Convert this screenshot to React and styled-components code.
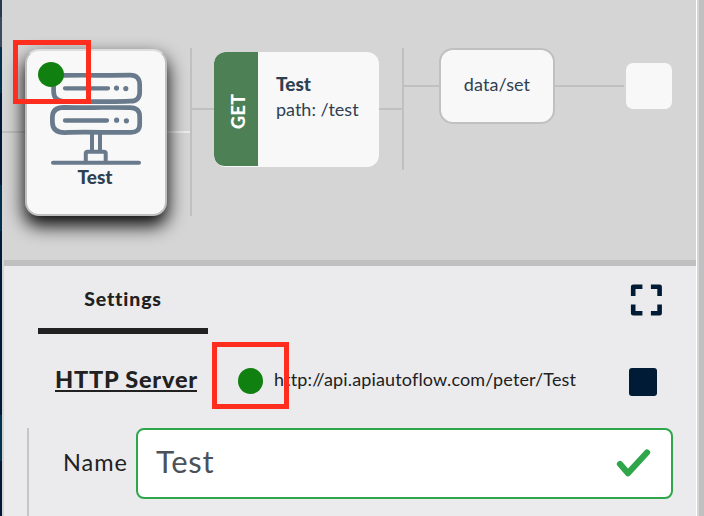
import React from "react";
import styled, { createGlobalStyle } from "styled-components";

const GlobalStyle = createGlobalStyle`
  * { box-sizing: border-box; }
  body { margin: 0; overflow: hidden; font-family: Lato, "Liberation Sans", sans-serif; }
`;

const Screen = styled.div`
  display: flex;
  width: 704px;
  height: 516px;
  background: #d5d5d5;
  overflow: hidden;
`;

const Backdrop = styled.div`
  width: 2px;
  background: linear-gradient(#2b3a50 0 17px, #3a4a60 17px 47px, #00304e 47px 93px, #001738 93px 185px, #00304e 185px 231px, #001b3a 231px 415px, #003450 415px 461px, #001738 461px);
`;

const Workspace = styled.main`
  width: 694px;
`;

const ScrollTrack = styled.div`
  width: 8px;
  border-left: 1px solid #fff;
  background: linear-gradient(to right, #d5d5d5 2px, #c0c0c0 2px);
`;

const Flow = styled.section`
  display: flex;
  align-items: flex-start;
  height: 260px;
  padding-top: 48px;
  background: #d5d5d5;
`;

const Wire = styled.div`
  flex: none;
  width: ${(p) => p.$length}px;
  height: 2px;
  margin-top: ${(p) => p.$drop}px;
  background: ${(p) => (p.$light ? "#ececec" : "#c0c0c0")};
`;

const Branch = styled.div`
  flex: none;
  width: 2px;
  height: ${(p) => p.$height}px;
  background: #c0c0c0;
`;

const NodeCard = styled.article`
  flex: none;
  color: #2f4052;
  background: #f8f8f8;
`;

const ServerCard = styled(NodeCard)`
  position: relative;
  width: 142px;
  height: 167px;
  margin-top: 1px;
  padding-top: 21px;
  border: 2px solid #c0c0c0;
  border-top-color: #dedede;
  border-radius: 14px;
  text-align: center;
  box-shadow: 0 9px 18px 1px rgba(0, 0, 0, 0.95);
`;

const ServerDrawing = styled.svg`
  display: block;
  width: 94px;
  height: 94px;
  margin: 0 0 -1px 22px;
`;

const NodeTitle = styled.div`
  padding-right: ${(p) => p.$inset || 0}px;
  font-size: 19px;
  font-weight: 900;
  line-height: 24px;
`;

const StatusDot = styled.span`
  flex: none;
  width: ${(p) => p.$w}px;
  height: ${(p) => p.$h}px;
  border-radius: 50%;
  background: #108010;
`;

const Highlight = styled.div`
  position: absolute;
  z-index: 2;
  display: flex;
  left: ${(p) => p.$x}px;
  top: ${(p) => p.$y}px;
  width: ${(p) => p.$w}px;
  height: ${(p) => p.$h}px;
  padding: ${(p) => p.$pad};
  border: 5px solid #ff2d1e;
`;

const RouteCard = styled(NodeCard)`
  display: flex;
  width: 165px;
  height: 115px;
  margin-top: 4px;
  border-radius: 12px;
  overflow: hidden;
`;

const Method = styled.div`
  display: flex;
  align-items: center;
  justify-content: center;
  width: 44px;
  height: 114px;
  padding: 0 4px 4px 0;
  border-radius: 0 10px 10px 0;
  writing-mode: vertical-rl;
  transform: rotate(180deg);
  background: #4d8054;
  color: #fff;
  font-size: 18px;
  font-weight: 900;
  letter-spacing: 0.5px;
`;

const RouteText = styled.div`
  padding: 20px 0 0 18px;
`;

const RoutePath = styled.div`
  font-size: 18px;
  line-height: 26px;
`;

const ActionCard = styled(NodeCard)`
  width: 116px;
  height: 76px;
  padding-top: 21px;
  border: 2px solid #c0c0c0;
  border-radius: 14px;
  text-align: center;
  font-size: 18px;
  line-height: 26px;
  letter-spacing: 0.1px;
`;

const EmptyCard = styled(NodeCard)`
  width: 46px;
  height: 46px;
  margin: 15px 0 0 2px;
  border-radius: 7px;
`;

const Panel = styled.section`
  height: 256px;
  margin-left: 2px;
  border-top: 6px solid #c0c0c0;
  background: #ebebed;
  color: #212121;
`;

const TabBar = styled.div`
  display: flex;
  justify-content: space-between;
  height: 68px;
  padding: 0 34px;
`;

const Tab = styled.div`
  width: 170px;
  border-bottom: 6px solid #212121;
  padding-top: 20px;
  text-align: center;
  font-size: 19.5px;
  font-weight: 900;
  line-height: 26px;
  letter-spacing: 0.85px;
`;

const ExpandIcon = styled.svg`
  width: 32px;
  height: 32px;
  margin-top: 18px;
`;

const ServerRow = styled.div`
  position: relative;
  display: flex;
  height: 94px;
  padding-left: 51px;
`;

const Heading = styled.h2`
  width: 142px;
  height: 26px;
  margin: 32px 0 0;
  border-bottom: 2px solid #212121;
  font-size: 23.5px;
  font-weight: 900;
  line-height: 26px;
  letter-spacing: 0.8px;
  white-space: nowrap;
`;

const Address = styled.div`
  width: 354px;
  padding: 32px 0 0 77px;
  font-size: 18px;
  line-height: 26px;
  letter-spacing: 0.15px;
  white-space: nowrap;
`;

const StopButton = styled.button`
  width: 28px;
  height: 28px;
  margin-top: 34px;
  margin-left: 78px;
  border: 0;
  border-radius: 3px;
  background: #001b36;
`;

const Fields = styled.div`
  display: flex;
  height: 88px;
  margin-left: 23px;
  border-left: 2px solid #c6c6c8;
`;

const Label = styled.label`
  width: 107px;
  padding: 18px 0 0 34px;
  font-size: 23.5px;
  line-height: 32px;
  letter-spacing: 1px;
  white-space: nowrap;
`;

const Input = styled.div`
  display: flex;
  justify-content: space-between;
  width: 537px;
  height: 71px;
  padding: 11px 20px 0 18px;
  border: 2px solid #30a64b;
  border-radius: 8px;
  background: #fff;
  color: #4b525a;
  font-size: 31px;
  line-height: 40px;
  letter-spacing: 0.7px;
`;

const CheckIcon = styled.svg`
  width: 36px;
  height: 32px;
  margin-top: 6px;
`;

export default function App() {
  return (
    <Screen>
      <GlobalStyle />
      <Backdrop />
      <Workspace>
        <Flow>
          <Wire $length={23} $drop={83} />
          <ServerCard>
            <Highlight $x={-14} $y={-11} $w={78} $h={64} $pad="17px 0 0 20px">
              <StatusDot $w={26} $h={25} />
            </Highlight>
            <ServerDrawing viewBox="49 72 94 94" fill="none" stroke="#687a8b" strokeWidth="4.7" strokeLinecap="round" strokeLinejoin="round">
              <path d="M63 75.4C81 75 112 75.6 130 75.2Q139.8 75 139.7 85V92Q139.8 101.4 130 101.2C112 102.3 85 101.2 65 101.5Q53.5 101.4 53.6 91V84Q53.5 75.5 63 75.4Z" />
              <path d="M64 107.3C86 107.8 111 107.3 130 107.6Q140 107.8 139.7 117V124Q139.8 132.8 130 132.4C110 132.8 82 131.5 65 132.6Q52.4 132.6 52.4 122V117Q52.5 107.4 64 107.3Z" />
              <path strokeWidth="4.3" d="M65 88.3H108M65 120.5H107" />
              <path strokeWidth="5.2" d="M116.5 88.1h.01M125.8 88.6h.01M116.6 120.2h.01M126.4 120.8h.01" />
              <path strokeWidth="4" d="M92 134V151M100 134V151M85.8 161V153Q86 151.7 88 151.8H103.5Q105.5 151.7 105.7 153V161M53 162.8H139" />
            </ServerDrawing>
            <NodeTitle $inset={2}>Test</NodeTitle>
          </ServerCard>
          <Wire $length={23} $drop={83} $light />
          <Branch $height={168} />
          <Wire $length={22} $drop={60} />
          <RouteCard>
            <Method>GET</Method>
            <RouteText>
              <NodeTitle>Test</NodeTitle>
              <RoutePath>path: /test</RoutePath>
            </RouteText>
          </RouteCard>
          <Wire $length={23} $drop={60} />
          <Branch $height={122} />
          <Wire $length={35} $drop={37} />
          <ActionCard>data/set</ActionCard>
          <Wire $length={69} $drop={37} />
          <EmptyCard />
        </Flow>
        <Panel>
          <TabBar>
            <Tab>Settings</Tab>
            <ExpandIcon viewBox="0 0 32 32" fill="none" stroke="#001b36" strokeWidth="4.6" strokeLinejoin="round">
              <path d="M3.2 12V2.8H12.4M20.9 2.8H29.6V12M29.6 20.5V29.2H20.9M12.4 29.2H3.2V20.5" />
            </ExpandIcon>
          </TabBar>
          <ServerRow>
            <Heading>HTTP Server</Heading>
            <Address>http://api.apiautoflow.com/peter/Test</Address>
            <StopButton aria-label="Stop" />
            <Highlight $x={208} $y={8} $w={77} $h={67} $pad="21px 0 0 21px">
              <StatusDot $w={25} $h={26} />
            </Highlight>
          </ServerRow>
          <Fields>
            <Label>Name</Label>
            <Input>
              Test
              <CheckIcon viewBox="0 0 36 32" fill="none" stroke="#30a64b" strokeWidth="6.2" strokeLinecap="round" strokeLinejoin="round">
                <path d="M5 17L13 26.2L32 5.5" />
              </CheckIcon>
            </Input>
          </Fields>
        </Panel>
      </Workspace>
      <ScrollTrack />
    </Screen>
  );
}
